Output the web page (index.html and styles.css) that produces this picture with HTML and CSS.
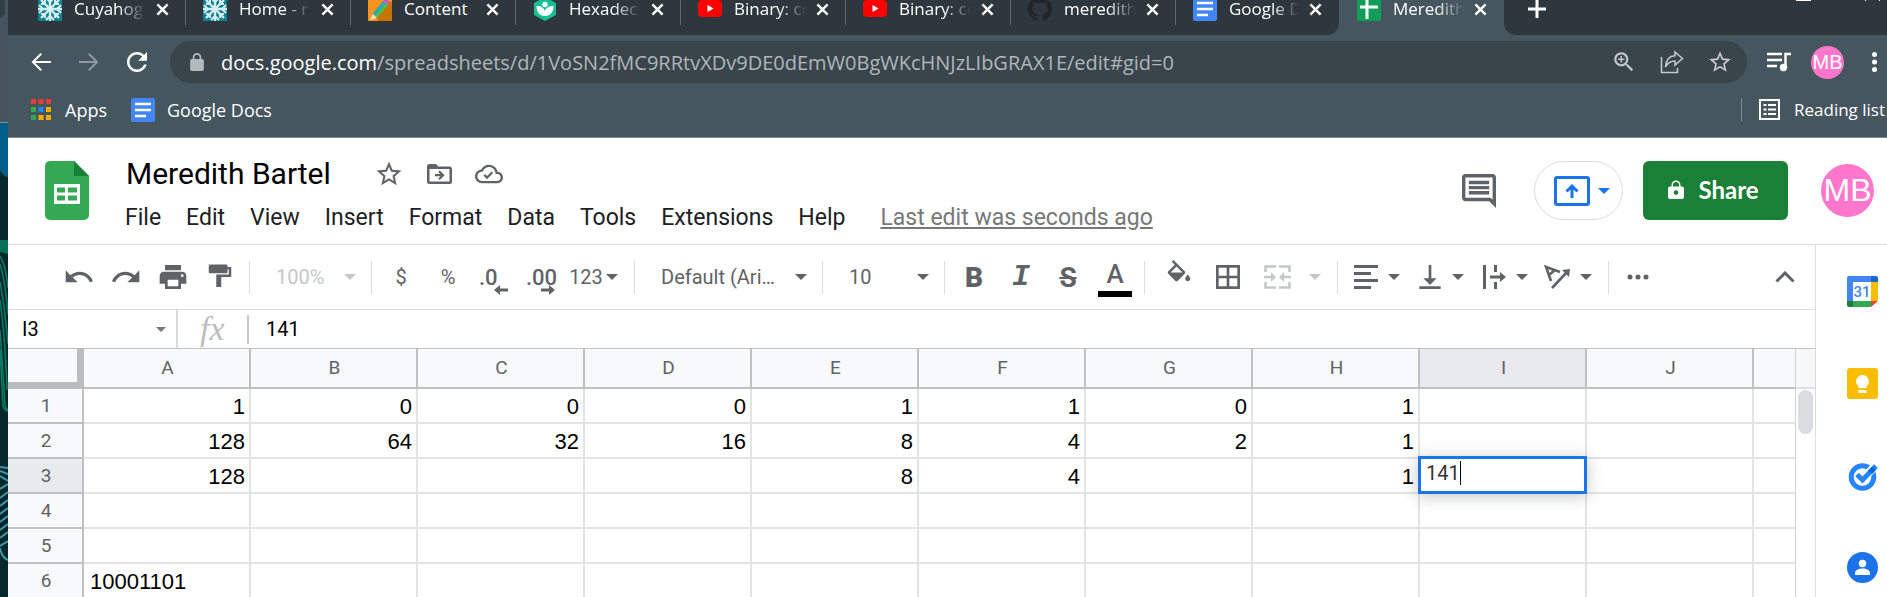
FILE: index.html
```html
<!DOCTYPE html>
<html lang="en">
<head>
<meta charset="utf-8">
<title>Meredith Bartel - Google Sheets</title>
<link rel="stylesheet" href="styles.css">
</head>
<body class="desktop">
<svg width="0" height="0" class="defs" aria-hidden="true">
  <symbol id="close" viewBox="0 0 14 14"><path d="M1.500 1.500l11 11M12.500 1.500l-11 11" stroke="#fff" stroke-width="2.600"/></symbol>
  <symbol id="snow" viewBox="0 0 24 24"><path fill="#0f7f92" d="M0 0h24v24H0z"/><g stroke="#d5eef0" stroke-width="2" fill="none"><path d="M12 0v24M0 12h24M3 3l18 18M21 3L3 21" stroke-width="2.400"/><path d="M8 1l4 4 4-4M8 23l4-4 4 4M1 8l4 4-4 4M23 8l-4 4 4 4M3 7h4V3M17 3v4h4M3 17h4v4M17 21v-4h4"/></g></symbol>
  <symbol id="tube" viewBox="0 0 24 24"><rect y="3" width="24" height="17" rx="4" fill="#f00"/><path d="M9.500 8v7l6-3.500z" fill="#fff"/></symbol>
  <symbol id="doc" viewBox="0 0 24 24"><rect width="24" height="24" rx="2" fill="#4285f4"/><path d="M4 6h16M4 12h16M4 18h11" stroke="#fff" stroke-width="2.400"/></symbol>
  <symbol id="down" viewBox="0 0 12 6"><path d="M0 0h12L6 6z" fill="currentColor"/></symbol>
  <symbol id="star" viewBox="0 0 24 24"><path fill="currentColor" d="M22 9.240l-7.190-.62L12 2 9.190 8.630 2 9.240l5.460 4.730L5.820 21 12 17.270 18.180 21l-1.630-7.030L22 9.240zM12 15.400l-3.760 2.270 1-4.280-3.320-2.880 4.380-.38L12 6.100l1.710 4.040 4.380.38-3.320 2.880 1 4.280L12 15.400z"/></symbol>
  <symbol id="back" viewBox="0 0 24 24"><path fill="currentColor" d="M22 11H6.300l6.600-6.600L11.500 3l-9 9 9 9 1.400-1.400L6.300 13H22z"/></symbol>
</svg>

<svg class="wallpaper" viewBox="0 0 8 597" preserveAspectRatio="xMinYMin slice" aria-hidden="true">
  <path fill="#45545d" d="M0 0h8v122H0z"/><path fill="#353f46" d="M0 0h5v14l-5 4z"/>
  <path fill="#06272b" d="M0 122h8v475H0z"/><path fill="#005f88" d="M0 123h8v54c-4 0-6-4-8-7z"/>
  <path stroke="#87939a" d="M0 122.500h8"/>
  <path fill="#077157" d="M0 240h8v14L0 252z"/>
  <g fill="none" stroke="#0b7d61" stroke-width="1.500"><path d="M0 256q6 10 8 32M0 264q5 16 8 50M0 282q4 20 8 62M0 300q5 34 7 90M0 330q3 40 5 76l3 5M0 350l3 56q1 4 5 5"/></g>
  <g fill="none" stroke="#3f97a3" stroke-width="2"><path d="M0 467l8 1M0 471l8 3M0 476l8 5M0 489l8-5M0 498l8-6M0 506l8-6M0 514l8-6M0 522l8-6M0 530l8-6M0 538l8-6M0 546l8-5M0 548q2 10 8 12"/></g>
</svg>

<div class="window">
  <header class="browser">
    <div class="strip">
      <nav class="tabs" aria-label="Tabs">
        <div class="tab"><svg class="fav"><use href="#snow"/></svg><span class="tab-name">Cuyahog</span><button class="tab-close" aria-label="Close"><svg><use href="#close"/></svg></button></div>
        <div class="tab"><svg class="fav"><use href="#snow"/></svg><span class="tab-name">Home - r</span><button class="tab-close" aria-label="Close"><svg><use href="#close"/></svg></button></div>
        <div class="tab"><svg class="fav" viewBox="0 0 24 24"><path fill="#f7941d" d="M0 0h24v24H0z"/><path fill="#c77400" d="M8 21L22 4l2 2v18H11z"/><path d="M6 18L17 5" stroke="#2aa7b8" stroke-width="4"/><path d="M8 20L19 7" stroke="#4cc04a" stroke-width="3"/><path d="M5 17l4 4-7 2z" fill="#f5e3c0"/><path d="M15 4l5 4 2-3-5-4z" fill="#c65bc2"/></svg><span class="tab-name whole">Content</span><button class="tab-close" aria-label="Close"><svg><use href="#close"/></svg></button></div>
        <div class="tab"><svg class="fav" viewBox="0 0 24 24"><path fill="#14bf96" d="M12 0l11 6v12l-11 6-11-6V6z"/><circle cx="12" cy="7.500" r="2.700" fill="#fff"/><path fill="#fff" d="M3.500 9c5 0 7.500 2 8.500 5 1-3 3.500-5 8.500-5 0 6-3 10-8.500 10S3.500 15 3.500 9z"/></svg><span class="tab-name">Hexadec</span><button class="tab-close" aria-label="Close"><svg><use href="#close"/></svg></button></div>
        <div class="tab"><svg class="fav"><use href="#tube"/></svg><span class="tab-name">Binary: co</span><button class="tab-close" aria-label="Close"><svg><use href="#close"/></svg></button></div>
        <div class="tab"><svg class="fav"><use href="#tube"/></svg><span class="tab-name">Binary: co</span><button class="tab-close" aria-label="Close"><svg><use href="#close"/></svg></button></div>
        <div class="tab"><svg class="fav" viewBox="0 0 16 16"><path fill="#1f2529" d="M8 0C3.580 0 0 3.580 0 8c0 3.540 2.290 6.530 5.470 7.590.4.070.55-.17.55-.38 0-.19-.01-.82-.01-1.490-2.010.37-2.530-.49-2.690-.94-.09-.23-.48-.94-.82-1.130-.28-.15-.68-.52-.01-.53.63-.01 1.080.58 1.230.82.72 1.210 1.870.87 2.330.66.070-.52.28-.87.51-1.070-1.780-.2-3.640-.89-3.640-3.950 0-.87.31-1.590.82-2.150-.08-.2-.36-1.020.08-2.120 0 0 .67-.21 2.200.82.64-.18 1.320-.27 2-.27s1.360.09 2 .27c1.530-1.040 2.200-.82 2.200-.82.44 1.100.16 1.920.08 2.120.51.56.82 1.270.82 2.150 0 3.070-1.870 3.750-3.650 3.950.29.25.54.73.54 1.480 0 1.070-.01 1.930-.01 2.200 0 .21.15.46.55.38A8.010 8.010 0 0 0 16 8c0-4.420-3.580-8-8-8z"/></svg><span class="tab-name">meredith</span><button class="tab-close" aria-label="Close"><svg><use href="#close"/></svg></button></div>
        <div class="tab last"><svg class="fav"><use href="#doc"/></svg><span class="tab-name">Google D</span><button class="tab-close" aria-label="Close"><svg><use href="#close"/></svg></button></div>
      </nav>
      <div class="tab current"><svg class="fav" viewBox="0 0 24 24"><rect width="24" height="24" rx="2" fill="#0f9d58"/><path d="M3 10h18M10 2v20" stroke="#fff" stroke-width="3"/></svg><span class="tab-name">Meredith</span><button class="tab-close" aria-label="Close"><svg><use href="#close"/></svg></button></div>
      <div class="strip-rest">
        <button class="new-tab" aria-label="New tab"><svg width="18" height="18" viewBox="0 0 18 18"><path d="M9 0v18M0 9h18" stroke="#fff" stroke-width="3"/></svg></button>
        <svg class="caption" width="84" height="2" viewBox="0 0 84 2" aria-hidden="true"><path d="M0 0h15v1H0zM69 0h1v1h-1zM83 0h1v1h-1z" fill="#fff"/></svg>
      </div>
    </div>

    <div class="nav-row">
      <button class="nav-btn" aria-label="Back"><svg width="24" height="24"><use href="#back"/></svg></button>
      <button class="nav-btn forward" aria-label="Forward"><svg width="24" height="24"><use href="#back"/></svg></button>
      <button class="nav-btn" aria-label="Reload"><svg width="30" height="30" viewBox="0 0 24 24"><path fill="#fff" d="M17.650 6.350C16.200 4.900 14.210 4 12 4c-4.420 0-7.990 3.580-7.990 8s3.570 8 7.990 8c3.730 0 6.840-2.550 7.730-6h-2.080c-.82 2.330-3.040 4-5.650 4-3.310 0-6-2.690-6-6s2.690-6 6-6c1.660 0 3.140.69 4.220 1.780L13 11h7V4l-2.350 2.350z"/></svg></button>
      <div class="omnibox">
        <svg width="18" height="18" viewBox="3 1 18 21"><path fill="#b4b9bd" fill-rule="evenodd" d="M18 8h-1V6c0-2.760-2.240-5-5-5S7 3.240 7 6v2H6c-1.100 0-2 .9-2 2v10c0 1.100.9 2 2 2h12c1.100 0 2-.9 2-2V10c0-1.100-.9-2-2-2zM9 6c0-1.660 1.340-3 3-3s3 1.340 3 3v2H9z"/></svg>
        <a class="url" href="#gid=0"><b>docs.google.com</b>/spreadsheets/d/1VoSN2fMC9RRtvXDv9DE0dEmW0BgWKcHNJzLIbGRAX1E/edit#gid=0</a>
        <button class="omni-btn" aria-label="Zoom"><svg width="26" height="26" viewBox="0 0 24 24"><path fill="currentColor" d="M15.500 14h-.79l-.28-.27C15.410 12.590 16 11.110 16 9.500 16 5.910 13.090 3 9.500 3S3 5.910 3 9.500 5.910 16 9.500 16c1.610 0 3.090-.59 4.230-1.570l.27.28v.79l5 4.990L20.490 19l-4.990-5zm-6 0C7.010 14 5 11.990 5 9.500S7.010 5 9.500 5 14 7.010 14 9.500 11.990 14 9.500 14zM12.500 10.200h-2.300v2.300H8.800v-2.300H6.500V8.800h2.300V6.500h1.400v2.300h2.300z"/></svg></button>
        <button class="omni-btn" aria-label="Share page"><svg width="24" height="24" viewBox="0 0 24 24" fill="none" stroke="currentColor" stroke-width="1.600"><path d="M1.500 7v15.500h16V18M15 2l7.500 6.500L15 15v-4c-5 0-7.500 2-9.500 6C6 10 9 6 15 5.800z"/></svg></button>
        <button class="omni-btn" aria-label="Bookmark"><svg width="26" height="26"><use href="#star"/></svg></button>
      </div>
      <button class="nav-btn media" aria-label="Media"><svg width="24" height="20" viewBox="0 0 24 20"><path d="M0 2h15M0 8h15M0 14h10" stroke="#fff" stroke-width="2.400"/><path d="M18.500 15V2H24" stroke="#fff" stroke-width="2.400" fill="none"/><circle cx="16.500" cy="15.500" r="3.700" fill="#fff"/></svg></button>
      <span class="avatar small">MB</span>
      <button class="nav-btn kebab" aria-label="Menu"><svg width="5" height="20" viewBox="0 0 5 20"><g fill="#fff"><circle cx="2.500" cy="2.500" r="2.500"/><circle cx="2.500" cy="10" r="2.500"/><circle cx="2.500" cy="17.500" r="2.500"/></g></svg></button>
    </div>

    <div class="bookmarks">
      <a class="bookmark" href="#apps"><svg width="20" height="21" viewBox="0 0 20 21"><path fill="#ea3b35" d="M0 0h5v5H0zM7.500 0h5v5h-5zM15 0h5v5h-5z"/><path fill="#34a853" d="M0 8h5v5H0zM0 16h5v5H0z"/><path fill="#1e88f5" d="M7.500 8h5v5h-5z"/><path fill="#f9ab00" d="M15 8h5v5h-5zM15 16h5v5h-5zM7.500 16h5v5h-5z"/></svg>Apps</a>
      <a class="bookmark docs" href="#docs"><svg width="24" height="24"><use href="#doc"/></svg>Google Docs</a>
      <button class="reading"><svg width="21" height="21" viewBox="0 0 21 21" fill="none" stroke="#fff"><path d="M1 1h19v19H1z" stroke-width="2"/><path d="M4.500 6h3M4.500 10.500h3M4.500 15h3M9 6h8M9 10.500h8M9 15h8" stroke-width="2"/></svg>Reading list</button>
    </div>
  </header>

  <div class="app-head">
    <svg class="logo" width="44" height="59" viewBox="0 0 44 59"><path fill="#34a853" d="M5 0h24l15 15v39a5 5 0 0 1-5 5H5a5 5 0 0 1-5-5V5a5 5 0 0 1 5-5z"/><path fill="#188038" d="M29 0l15 15H29z"/><path fill="#fff" fill-rule="evenodd" d="M9 23h26v20H9zm3 3.500v5h8v-5zm11 0v5h9v-5zm-11 8v5h8v-5zm11 0v5h9v-5z"/></svg>
    <div class="title-block">
      <div class="title-row">
        <h1>Meredith Bartel</h1>
        <button class="head-icon" aria-label="Star"><svg width="30" height="30"><use href="#star"/></svg></button>
        <button class="head-icon" aria-label="Move"><svg width="25" height="20" viewBox="0 0 25 20"><path fill="currentColor" fill-rule="evenodd" d="M2.500 0H9l2.500 2.500h11A2.500 2.500 0 0 1 25 5v12.500a2.500 2.500 0 0 1-2.500 2.500h-20A2.500 2.500 0 0 1 0 17.500v-15A2.500 2.500 0 0 1 2.500 0zm0 5v12.500h20V5z"/><path d="M8 11.200h7M12 7.200l4 4-4 4" fill="none" stroke="currentColor" stroke-width="2.200"/></svg></button>
        <button class="head-icon" aria-label="Saved to Drive"><svg width="28" height="28" viewBox="0 0 24 24"><path fill="currentColor" d="M19.350 10.040C18.670 6.590 15.640 4 12 4 9.110 4 6.600 5.640 5.350 8.040 2.340 8.360 0 10.910 0 14c0 3.310 2.690 6 6 6h13c2.760 0 5-2.240 5-5 0-2.640-2.050-4.780-4.650-4.960zM19 18H6c-2.210 0-4-1.790-4-4 0-2.050 1.530-3.760 3.560-3.970l1.070-.11.5-.95C8.080 7.140 9.940 6 12 6c2.620 0 4.880 1.860 5.390 4.430l.3 1.500 1.530.11c1.560.1 2.780 1.410 2.780 2.960 0 1.650-1.350 3-3 3zm-8.700-4.200l-1.700-1.700-1.300 1.300 3 3 5.200-5.200-1.300-1.300z"/></svg></button>
      </div>
      <nav class="menus" aria-label="Menu bar">
        <button>File</button><button>Edit</button><button>View</button><button>Insert</button><button>Format</button><button>Data</button><button>Tools</button><button>Extensions</button><button>Help</button>
        <a class="last-edit" href="#history">Last edit was seconds ago</a>
      </nav>
    </div>
    <button class="comments" aria-label="Comments"><svg width="34" height="34" viewBox="2 2 20 20"><path fill="#5f6368" d="M21.990 4c0-1.100-.89-2-1.990-2H4c-1.100 0-2 .9-2 2v12c0 1.100.9 2 2 2h14l4 4-.01-18zM20 4v13.170L18.830 16H4V4h16zM6 12h12v2H6v-2zm0-3h12v2H6V9zm0-3h12v2H6V6z"/></svg></button>
    <button class="present" aria-label="Present"><svg width="36" height="30" viewBox="0 0 36 30" fill="none" stroke="#1a73e8"><rect x="1.500" y="1.500" width="33" height="27" rx="1.500" stroke-width="3"/><path d="M18 22V11M12.500 15.500L18 10l5.500 5.500" stroke-width="3"/></svg><svg width="12" height="6"><use href="#down"/></svg></button>
    <button class="share"><svg width="16" height="19" viewBox="0 0 16 19"><path fill="#fff" fill-rule="evenodd" d="M2 6.500h1.500V5a4.500 4.500 0 0 1 9 0v1.500H14a2 2 0 0 1 2 2V17a2 2 0 0 1-2 2H2a2 2 0 0 1-2-2V8.500a2 2 0 0 1 2-2zm3 0h6V5a3 3 0 0 0-6 0zm3 3.800a2.300 2.300 0 1 0 .01 0z"/></svg>Share</button>
    <span class="avatar large">MB</span>
  </div>

  <div class="work">
    <main class="editor">
      <div class="toolbar" role="toolbar">
        <div class="group">
          <button aria-label="Undo"><svg width="32" height="32" viewBox="0 0 24 24"><path fill="currentColor" d="M12.500 8c-2.650 0-5.050.99-6.900 2.600L2 7v9h9l-3.620-3.620c1.390-1.160 3.160-1.880 5.120-1.880 3.540 0 6.550 2.310 7.600 5.500l2.370-.78C21.080 11.030 17.150 8 12.500 8z"/></svg></button>
          <button aria-label="Redo"><svg width="32" height="32" viewBox="0 0 24 24"><path fill="currentColor" d="M11.500 8c2.650 0 5.050.99 6.900 2.600L22 7v9h-9l3.620-3.620c-1.390-1.160-3.160-1.880-5.120-1.880-3.540 0-6.550 2.310-7.600 5.500l-2.370-.78C2.920 11.030 6.850 8 11.500 8z"/></svg></button>
          <button aria-label="Print"><svg width="32" height="32" viewBox="0 0 24 24"><path fill="currentColor" d="M19 8H5c-1.660 0-3 1.340-3 3v6h4v4h12v-4h4v-6c0-1.660-1.340-3-3-3zm-3 11H8v-5h8v5zm3-7c-.55 0-1-.45-1-1s.45-1 1-1 1 .45 1 1-.45 1-1 1zm-1-9H6v4h12V3z"/></svg></button>
          <button aria-label="Paint format"><svg width="30" height="30" viewBox="0 0 24 24"><path fill="currentColor" d="M18 4V3c0-.55-.45-1-1-1H4c-.55 0-1 .45-1 1v5c0 .55.45 1 1 1h13c.55 0 1-.45 1-1V6h1v4H9v10h4v-8h8V4z"/></svg></button>
        </div>
        <label class="pick zoom"><select aria-label="Zoom" disabled><option>100%</option></select><svg class="arrow"><use href="#down"/></svg></label>
        <div class="group">
          <button>$</button><button>%</button>
          <button class="decimal" aria-label="Decrease decimal places"><b>.0</b><svg width="14" height="10" viewBox="0 0 14 10"><path d="M0 5l6-5v3.500h8v3H6V10z" fill="currentColor"/></svg></button>
          <button class="decimal" aria-label="Increase decimal places"><b>.00</b><svg width="14" height="10" viewBox="0 0 14 10"><path d="M14 5L8 0v3.500H0v3h8V10z" fill="currentColor"/></svg></button>
          <button class="number">123<svg class="arrow"><use href="#down"/></svg></button>
        </div>
        <label class="pick font"><select aria-label="Font"><option>Default (Ari…</option></select><svg class="arrow"><use href="#down"/></svg></label>
        <label class="pick size"><select aria-label="Font size"><option>10</option></select><svg class="arrow"><use href="#down"/></svg></label>
        <div class="group styles">
          <button class="bold">B</button><button class="italic">I</button><button class="strike">S</button><button class="colour">A</button>
        </div>
        <div class="group fills">
          <button aria-label="Fill colour"><svg class="bucket" width="30" height="30" viewBox="0 0 24 24"><path fill="currentColor" d="M16.560 8.940L7.620 0 6.210 1.410l2.380 2.380-5.150 5.150c-.59.59-.59 1.540 0 2.120l5.500 5.500c.29.29.68.44 1.060.44s.77-.15 1.060-.44l5.500-5.500c.59-.58.59-1.530 0-2.120zM5.210 10L10 5.210 14.790 10H5.210zM19 11.500s-2 2.170-2 3.500c0 1.100.9 2 2 2s2-.9 2-2c0-1.330-2-3.500-2-3.500z"/></svg></button>
          <button aria-label="Borders"><svg width="32" height="32" viewBox="0 0 24 24"><path fill="currentColor" d="M3 3v18h18V3H3zm8 16H5v-6h6v6zm0-8H5V5h6v6zm8 8h-6v-6h6v6zm0-8h-6V5h6v6z"/></svg></button>
          <button class="merge" aria-label="Merge cells" disabled><svg width="27" height="24" viewBox="0 0 27 24" fill="none" stroke="currentColor" stroke-width="2.600"><path d="M1.500 7V1.500H12M15 1.500h10.500V7M1.500 17v5.500H12M15 22.500h10.500V17M0 12h9M27 12h-9"/><path fill="currentColor" stroke="none" d="M7 7l5 5-5 5zM20 7l-5 5 5 5z"/></svg><svg class="arrow"><use href="#down"/></svg></button>
        </div>
        <div class="group pairs">
          <button aria-label="Horizontal align"><svg width="32" height="24" viewBox="0 0 32 24"><path fill="currentColor" d="M4 0h24v3H4zM4 7h17v3H4zM4 14h24v3H4zM4 21h17v3H4z"/></svg><svg class="arrow"><use href="#down"/></svg></button>
          <button aria-label="Vertical align"><svg width="32" height="32" viewBox="0 0 24 24"><path fill="currentColor" d="M17 13h-4V3h-2v10H7l5 5zM4 19v2h16v-2z"/></svg><svg class="arrow"><use href="#down"/></svg></button>
          <button aria-label="Text wrapping"><svg width="32" height="24" viewBox="-4 0 32 24"><path fill="currentColor" d="M1 0h3v24H1zM12 0h3v7h-3zM12 17h3v7h-3zM8 10.500h10V7l6 5-6 5v-3.500H8z"/></svg><svg class="arrow"><use href="#down"/></svg></button>
          <button aria-label="Text rotation"><svg width="32" height="26" viewBox="-1 0 32 26" fill="none" stroke="currentColor" stroke-width="2.600"><path d="M8 17L3 3l14 5M6 11l6-5M9 24L24 8"/><path fill="currentColor" stroke="none" d="M19 6l8-1-1 8z"/></svg><svg class="arrow"><use href="#down"/></svg></button>
        </div>
        <div class="group"><button aria-label="More"><svg width="22" height="6" viewBox="0 0 22 6"><g fill="currentColor"><circle cx="3" cy="3" r="2.500"/><circle cx="11" cy="3" r="2.500"/><circle cx="19" cy="3" r="2.500"/></g></svg></button></div>
        <button class="collapse" aria-label="Hide menus"><svg width="20" height="12" viewBox="0 0 20 12"><path d="M1.500 10.500L10 2l8.500 8.500" fill="none" stroke="currentColor" stroke-width="3"/></svg></button>
      </div>

      <div class="formula">
        <label class="name-box"><input value="I3" aria-label="Name box"><svg width="10" height="5"><use href="#down"/></svg></label>
        <span class="fx">fx</span>
        <input class="formula-input" value="141" aria-label="Formula">
      </div>

      <div class="sheet">
        <table class="grid">
          <colgroup><col class="c-head"><col class="c"><col class="c"><col class="c"><col class="c"><col class="c"><col class="c"><col class="c"><col class="c"><col class="c"><col class="c"><col></colgroup>
          <thead><tr><td class="corner"></td><th>A</th><th>B</th><th>C</th><th>D</th><th>E</th><th>F</th><th>G</th><th>H</th><th class="on">I</th><th>J</th><th></th></tr></thead>
          <tbody>
            <tr><th>1</th><td>1</td><td>0</td><td>0</td><td>0</td><td>1</td><td>1</td><td>0</td><td>1</td><td></td><td></td><td></td></tr>
            <tr><th>2</th><td>128</td><td>64</td><td>32</td><td>16</td><td>8</td><td>4</td><td>2</td><td>1</td><td></td><td></td><td></td></tr>
            <tr><th class="on">3</th><td>128</td><td></td><td></td><td></td><td>8</td><td>4</td><td></td><td>1</td><td class="editing"><div class="cell-editor"><input value="141" aria-label="Cell I3"><span class="caret"></span></div></td><td></td><td></td></tr>
            <tr><th>4</th><td></td><td></td><td></td><td></td><td></td><td></td><td></td><td></td><td></td><td></td><td></td></tr>
            <tr><th>5</th><td></td><td></td><td></td><td></td><td></td><td></td><td></td><td></td><td></td><td></td><td></td></tr>
            <tr><th>6</th><td class="text">10001101</td><td></td><td></td><td></td><td></td><td></td><td></td><td></td><td></td><td></td><td></td></tr>
          </tbody>
        </table>
        <div class="scroll"><div class="scroll-top"></div><div class="thumb"></div></div>
      </div>
    </main>

    <aside class="side" aria-label="Side panel">
      <button aria-label="Calendar"><svg width="31" height="31" viewBox="0 0 31 31"><path fill="#4285f4" d="M2 0h22v6H6v19H0V2a2 2 0 0 1 2-2z"/><path fill="#1967d2" d="M24 0h5a2 2 0 0 1 2 2v4h-7z"/><path fill="#fbbc04" d="M24 6h7v19h-7z"/><path fill="#34a853" d="M6 25h18v6H6z"/><path fill="#188038" d="M0 25h6v6H2a2 2 0 0 1-2-2z"/><path fill="#ea4335" d="M24 25h7l-7 6z"/><text class="cal-day" x="15" y="21" text-anchor="middle">31</text></svg></button>
      <button aria-label="Keep"><svg width="31" height="31" viewBox="0 0 31 31"><rect width="31" height="31" rx="3" fill="#fbbc04"/><path fill="#fff" d="M15.500 7a6.500 6.500 0 0 1 4 11.500V20h-8v-1.500a6.500 6.500 0 0 1 4-11.500zM11.500 22h8v3h-8z"/></svg></button>
      <button aria-label="Tasks"><svg width="31" height="31" viewBox="0 0 31 31"><circle cx="15.500" cy="17" r="11.300" fill="none" stroke="#2684fc" stroke-width="5"/><path d="M10 15l5 5L29 5" fill="none" stroke="#fff" stroke-width="8"/><path d="M10 14.500l5.500 5.500L29 6" fill="none" stroke="#2684fc" stroke-width="5"/><path fill="#0066da" d="M21 10.500l4-4 4 3.500-4 4z"/></svg></button>
      <button aria-label="Contacts"><svg width="31" height="31" viewBox="0 0 31 31"><circle cx="15.500" cy="15.500" r="15.500" fill="#1a73e8"/><circle cx="15.500" cy="11.500" r="3.700" fill="#fff"/><path fill="#fff" d="M8 21c0-3 4-4.500 7.500-4.500S23 18 23 21v2H8z"/></svg></button>
    </aside>
  </div>
</div>
</body>
</html>
```
FILE: styles.css
```css
* { box-sizing: border-box; }

html, body { height: 100%; }

body.desktop {
  margin: 0;
  display: flex;
  overflow: hidden;
  background: #06272b;
  font-family: Roboto, "Liberation Sans", sans-serif;
}

button, input, select {
  margin: 0;
  padding: 0;
  border: 0;
  background: none;
  color: inherit;
  font: inherit;
}

svg { flex: none; }
a { color: inherit; text-decoration: none; }

.defs { position: absolute; }
.wallpaper { width: 8px; height: 100%; }

.window {
  flex: 1;
  min-width: 0;
  display: flex;
  flex-direction: column;
  background: #fff;
}

/* Browser chrome */
.browser {
  background: #46565f;
  border-bottom: 1px solid #7a868d;
  color: #fff;
  font-family: "Open Sans", "Noto Sans", sans-serif;
}

.strip { display: flex; height: 35px; }

.tabs {
  display: flex;
  padding-left: 13px;
  background: #2d373d;
  border-bottom-right-radius: 12px;
}

.tab {
  flex: none;
  display: flex;
  align-items: center;
  width: 165px;
  height: 25px;
  padding: 0 16px 7px 17px;
  border-right: 1px solid #5e686e;
  font-size: 17px;
  line-height: 18px;
}

.tab.last { width: 163px; border-right-color: transparent; }
.tab.current { padding-left: 18px; border-right-color: transparent; }

.fav { width: 24px; height: 24px; }

.tab-name {
  flex: 1;
  min-width: 0;
  margin: 0 2px 0 12px;
  white-space: nowrap;
  line-height: 24px;
  -webkit-mask-image: linear-gradient(to right, #000 55%, transparent 90%);
  mask-image: linear-gradient(to right, #000 55%, transparent 90%);
}

.tab-name.whole { -webkit-mask-image: none; mask-image: none; }

.tab-close, .tab-close svg { display: block; width: 13px; height: 13px; }

.strip-rest {
  flex: 1;
  display: flex;
  justify-content: space-between;
  align-items: flex-start;
  padding: 0 7px 0 24px;
  background: #2d373d;
  border-bottom-left-radius: 12px;
}

.new-tab svg { display: block; }

.nav-row {
  display: flex;
  align-items: center;
  padding: 6px 10px 0 9px;
}

.nav-btn {
  display: flex;
  justify-content: center;
  align-items: center;
  width: 48px;
}

.forward { color: #90999f; }
.forward svg { transform: scaleX(-1); }

.omnibox {
  flex: 1;
  min-width: 0;
  display: flex;
  align-items: center;
  height: 42px;
  margin-left: 9px;
  padding: 0 14px 0 18px;
  border-radius: 21px;
  background: #39444b;
}

.url {
  flex: 1;
  min-width: 0;
  margin-left: 15px;
  overflow: hidden;
  white-space: nowrap;
  color: #b0b6ba;
  font-size: 20px;
}

.url b { color: #fff; font-weight: 400; }

.omni-btn {
  display: flex;
  justify-content: center;
  width: 48px;
  color: #c3c7ca;
}

.omni-btn:last-child { width: 26px; margin-left: 11px; }

.media { width: 24px; margin: 0 20px; }

.avatar {
  flex: none;
  display: flex;
  justify-content: center;
  align-items: center;
  border-radius: 50%;
  background: #ff77cd;
  color: #fff;
  font-family: "Liberation Sans", sans-serif;
}

.small { width: 33px; height: 33px; font-size: 20px; }
.large { width: 53px; height: 53px; font-size: 32px; }

.kebab { width: 5px; margin-left: 28px; }

.bookmarks {
  display: flex;
  align-items: center;
  height: 54px;
  padding: 0 2px 1px 23px;
  font-size: 18px;
}

.bookmark { display: flex; align-items: center; gap: 14px; }
.docs { margin-left: 24px; gap: 12px; }

.reading {
  display: flex;
  align-items: center;
  gap: 14px;
  margin-left: auto;
  padding-left: 17px;
  border-left: 1px solid #7f8a91;
  font-size: 17px;
  white-space: nowrap;
}

/* Document header */
.app-head {
  display: flex;
  align-items: center;
  height: 107px;
  padding: 0 13px 1px 37px;
  border-bottom: 1px solid #dadce0;
}

.title-block { flex: 1; min-width: 0; margin-left: 36px; padding-top: 10px; }

.title-row { display: flex; align-items: center; height: 44px; }

h1 {
  margin: 0 43px 0 1px;
  color: #000;
  font-size: 30px;
  font-weight: 400;
  white-space: nowrap;
}

.head-icon { display: flex; margin-right: 23px; color: #5f6368; }

.menus {
  display: flex;
  align-items: center;
  gap: 25px;
  height: 44px;
  color: #202124;
  font-size: 23px;
  white-space: nowrap;
}

.last-edit {
  margin-left: 10px;
  color: #777;
  text-decoration: underline;
}

.comments { display: flex; margin-right: 38px; }

.present {
  display: flex;
  justify-content: center;
  align-items: center;
  gap: 8px;
  width: 89px;
  height: 59px;
  margin-right: 20px;
  padding-left: 6px;
  border: 1px solid #dadce0;
  border-radius: 30px;
  color: #1a73e8;
}

.share {
  display: flex;
  justify-content: center;
  align-items: center;
  gap: 14px;
  width: 145px;
  height: 59px;
  margin-right: 33px;
  padding: 0 4px 3px 0;
  border-radius: 6px;
  background: #1a8038;
  color: #fff;
  font-family: Lato, sans-serif;
  font-size: 24px;
  font-weight: 700;
}

/* Editor */
.work { flex: 1; min-height: 0; display: flex; }
.editor { flex: 1; min-width: 0; display: flex; flex-direction: column; }

.toolbar {
  flex: none;
  display: flex;
  align-items: center;
  height: 65px;
  padding-left: 48px;
  border-bottom: 1px solid #dadce0;
  color: #5f6368;
  font-size: 20px;
}

.group, .pick {
  flex: none;
  display: flex;
  align-items: center;
  gap: 1px;
  height: 33px;
  margin-right: 6px;
}

.group + .group, .group + .pick, .pick + .group, .pick + .pick {
  padding-left: 6px;
  border-left: 1px solid #dadce0;
}

.group button, .collapse {
  flex: none;
  display: flex;
  justify-content: center;
  align-items: center;
  width: 46px;
  height: 33px;
}

.toolbar .arrow { width: 12px; height: 6px; }

.pick { display: grid; align-items: center; color: #5f6368; }
.pick select, .pick svg { grid-area: 1 / 1; }
.pick svg { justify-self: end; margin-right: 9px; pointer-events: none; }

.pick select {
  width: 100%;
  padding-left: 20px;
  appearance: none;
  opacity: 1;
}

.zoom { width: 116px; color: #c4c7c9; }
.font { width: 182px; }
.size { width: 116px; }

.toolbar .decimal { position: relative; justify-content: flex-start; padding-left: 7px; font-size: 22px; }
.decimal b { font-weight: 500; }
.decimal svg { position: absolute; right: 10px; bottom: -1px; }

.toolbar .number { width: 62px; gap: 3px; padding-right: 7px; }

.toolbar .styles { padding-right: 6px; }
.bold { font-size: 28px; font-weight: 900; }
.italic { font: italic 700 30px "Liberation Mono", monospace; }
.strike { font-size: 28px; font-weight: 700; text-decoration: line-through; }

.toolbar .colour {
  width: 34px;
  height: 40px;
  margin: 0 0 0 6px;
  border-bottom: 6px solid #000;
  font-size: 26px;
  font-weight: 500;
}

.toolbar .fills { gap: 3px; padding-left: 11px; }
.bucket { margin-bottom: 4px; }
.toolbar .merge { justify-content: flex-start; gap: 18px; width: 77px; padding-left: 10px; color: #c4c7c9; }

.toolbar .pairs { padding-right: 2px; gap: 0; }
.toolbar .pairs button { justify-content: space-between; width: 64px; padding: 0 8px 0 6px; }

.toolbar .collapse { margin: 0 7px 0 auto; }

.formula {
  flex: none;
  display: flex;
  align-items: center;
  height: 39px;
  border-bottom: 1px solid #c0c0c0;
  color: #000;
  font-size: 20px;
}

.name-box {
  display: flex;
  align-items: center;
  justify-content: space-between;
  width: 170px;
  height: 100%;
  padding: 0 10px 0 14px;
  border-right: 2px solid #dadada;
}

.name-box input { width: 100px; }
.name-box svg { color: #777; }

.fx {
  width: 69px;
  padding-left: 22px;
  color: #bdbdbd;
  font: italic 34px/34px "Liberation Serif", serif;
}

.formula-input {
  flex: 1;
  height: 29px;
  padding-left: 17px;
  border-left: 2px solid #c8c8c8;
}

.sheet { flex: 1; min-height: 0; display: flex; align-items: stretch; overflow: hidden; }

.grid {
  flex: 1;
  align-self: flex-start;
  width: 100%;
  table-layout: fixed;
  border-collapse: separate;
  border-spacing: 0;
  color: #000;
  font-family: "Liberation Sans", Arial, sans-serif;
  font-size: 22px;
}

.c-head { width: 76px; }
.c { width: 167px; }

.grid td, .grid th {
  height: 35px;
  padding: 3px 4px 0;
  border-right: 2px solid #e2e3e3;
  border-bottom: 2px solid #e2e3e3;
  line-height: 24px;
  text-align: right;
}

.grid th {
  padding: 0 0 0 2px;
  border-color: #c0c0c0;
  background: #f8f9fa;
  color: #5f6368;
  font-family: Roboto, sans-serif;
  font-size: 19px;
  font-weight: 400;
  text-align: center;
}

.grid thead th { height: 40px; }
.grid .on { background: #e8eaed; }
.grid .text { padding-left: 6px; text-align: left; }

.grid .corner {
  border-right: 7px solid #bcbcbc;
  border-bottom: 7px solid #bcbcbc;
  background: #f8f9fa;
}

.grid tr > :last-child { border-right: 0; }
.grid .editing { position: relative; }

.cell-editor {
  position: absolute;
  inset: -3px -2px -2px;
  border: 3px solid #1a73e8;
  background: #fff;
  box-shadow: 0 2px 16px rgba(60, 64, 67, .3);
}

.cell-editor input {
  display: block;
  width: 100%;
  padding-left: 5px;
  color: #333;
  font: 20px/28px Roboto, sans-serif;
}

.caret {
  position: absolute;
  left: 39px;
  top: 2px;
  width: 1px;
  height: 24px;
  background: #000;
}

.scroll { flex: none; width: 20px; border-left: 1px solid #d0d0d0; }
.scroll-top { height: 40px; border-bottom: 2px solid #dadfe8; background: #f8f8f8; }
.thumb { width: 15px; height: 44px; margin: 1px 0 0 2px; border-radius: 8px; background: #dadce0; }

.side {
  flex: none;
  display: flex;
  flex-direction: column;
  align-items: center;
  gap: 61px;
  width: 72px;
  padding: 31px 0 0 22px;
  border-left: 1px solid #dadce0;
}

.side svg { display: block; }
.cal-day { fill: #4285f4; font: 500 15px Roboto, sans-serif; }
```
